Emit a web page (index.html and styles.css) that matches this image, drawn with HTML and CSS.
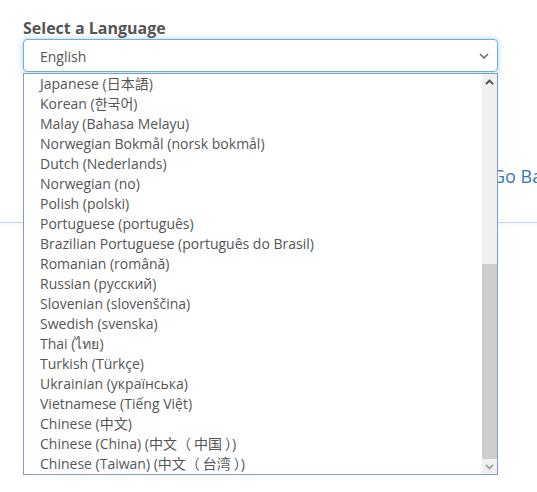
FILE: index.html
```html
<!DOCTYPE html>
<html lang="en">

<head>
    <meta charset="UTF-8">
    <meta name="viewport" content="width=device-width, initial-scale=1.0">
    <title>language</title>
    <link rel="stylesheet" href="styles.css">
</head>

<body>
    <div class="main">

        <!-- ----------- language picker ---------------- -->

        <div class="picker">
            <label class="picker-label">Select a Language</label>
            <div class="select-box">
                <span>English</span>
                <svg class="chev" width="10" height="6" viewBox="0 0 10 6">
                    <path d="M1 1 L5 5 L9 1" fill="none" stroke="#666" stroke-width="1.5" />
                </svg>
            </div>

            <div class="drop">
                <ul class="drop-list">
                    <li>Japanese (日本語)</li>
                    <li>Korean (한국어)</li>
                    <li>Malay (Bahasa Melayu)</li>
                    <li>Norwegian Bokmål (norsk bokmål)</li>
                    <li>Dutch (Nederlands)</li>
                    <li>Norwegian (no)</li>
                    <li>Polish (polski)</li>
                    <li>Portuguese (português)</li>
                    <li>Brazilian Portuguese (português do Brasil)</li>
                    <li>Romanian (română)</li>
                    <li>Russian (русский)</li>
                    <li>Slovenian (slovenščina)</li>
                    <li>Swedish (svenska)</li>
                    <li>Thai (ไทย)</li>
                    <li>Turkish (Türkçe)</li>
                    <li>Ukrainian (українська)</li>
                    <li>Vietnamese (Tiếng Việt)</li>
                    <li>Chinese (中文)</li>
                    <li>Chinese (China) (中文<span class="fw-open">（</span>中国<span class="fw-close">）</span>)</li>
                    <li>Chinese (Taiwan) (中文<span class="fw-open">（</span>台湾<span class="fw-close">）</span>)</li>
                </ul>
                <div class="scroll">
                    <div class="scroll-btn">
                        <svg width="9" height="6" viewBox="0 0 9 6">
                            <path d="M1 5 L4.5 1.5 L8 5" fill="none" stroke="#505050" stroke-width="1.8" />
                        </svg>
                    </div>
                    <div class="scroll-track">
                        <div class="scroll-thumb"></div>
                    </div>
                    <div class="scroll-btn">
                        <svg width="9" height="6" viewBox="0 0 9 6">
                            <path d="M1 1 L4.5 4.5 L8 1" fill="none" stroke="#a3a3a3" stroke-width="1.8" />
                        </svg>
                    </div>
                </div>
            </div>
        </div>

        <!-- ----------- page behind ---------------- -->

        <div class="actions">
            <a class="back" href="#">Go Back</a>
        </div>

        <div class="divider"></div>

    </div>
</body>

</html>
```

FILE: styles.css
```css
* {
    box-sizing: border-box;
    padding: 0;
    margin: 0;
}

body {
    font-family: "Open Sans", "Noto Sans", "Noto Sans CJK SC", sans-serif;
    background: #fff;
    overflow: hidden;
}

.main {
    width: 537px;
    height: 492px;
    padding: 17px 0 0 23px;
    overflow: hidden;
}

.picker {
    position: relative;
    width: 475px;
    z-index: 2;
}

.picker-label {
    display: block;
    font-size: 16px;
    font-weight: 700;
    line-height: 22px;
    color: #555;
}

.select-box {
    display: flex;
    align-items: center;
    justify-content: space-between;
    height: 33px;
    padding: 1px 8px 0 16px;
    border: 1px solid #66afe9;
    border-radius: 4px;
    box-shadow: 0 0 6px rgba(102, 175, 233, 0.55);
    font-size: 14px;
    color: #555;
    background: #fff;
}

.drop {
    position: absolute;
    top: 56px;
    left: 0;
    width: 475px;
    height: 402px;
    display: flex;
    border: 1px solid #7a9cd3;
    background: #fff;
}

.drop-list {
    flex: 1;
    list-style: none;
}

.drop-list li {
    height: 20px;
    line-height: 20px;
    padding-left: 16px;
    font-size: 14px;
    color: #555;
    white-space: nowrap;
}

.fw-open {
    padding-right: 3px;
}

.fw-close {
    padding-left: 3px;
}

.scroll {
    width: 15px;
    display: flex;
    flex-direction: column;
    background: #f0f0f0;
}

.scroll-btn {
    height: 15px;
    display: flex;
    align-items: center;
    justify-content: center;
}

.scroll-track {
    flex: 1;
    display: flex;
    flex-direction: column;
    justify-content: flex-end;
}

.scroll-thumb {
    height: 195px;
    background: #cdcdcd;
}

.actions {
    margin-top: 92px;
    padding-left: 469px;
    white-space: nowrap;
}

.back {
    font-size: 18px;
    line-height: 24px;
    color: #337ab7;
    text-decoration: none;
}

.divider {
    margin: 34px 0 0 -23px;
    height: 1px;
    width: 560px;
    background: #c9d5e3;
    box-shadow: 0 1px 3px rgba(160, 180, 210, 0.35);
}
```
